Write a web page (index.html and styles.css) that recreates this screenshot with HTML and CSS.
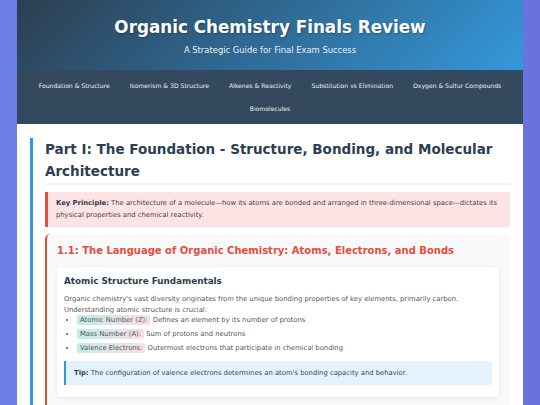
FILE: index.html
```html
<!DOCTYPE html>
<html lang="en">
<head>
<meta charset="utf-8">
<title>Organic Chemistry Finals Review</title>
<link rel="stylesheet" href="styles.css">
</head>
<body>
<div class="container">
  <header class="header">
    <h1 class="title">Organic Chemistry Finals Review</h1>
    <p class="subtitle">A Strategic Guide for Final Exam Success</p>
  </header>
  <nav class="nav">
    <a class="nav-link" href="#part1">Foundation &amp; Structure</a>
    <a class="nav-link" href="#part2">Isomerism &amp; 3D Structure</a>
    <a class="nav-link" href="#part3">Alkenes &amp; Reactivity</a>
    <a class="nav-link" href="#part4">Substitution vs Elimination</a>
    <a class="nav-link" href="#part5">Oxygen &amp; Sulfur Compounds</a>
    <a class="nav-link" href="#part6">Biomolecules</a>
  </nav>
  <main class="content">
    <section class="section" id="part1">
      <h2 class="section-title">Part I: The Foundation - Structure, Bonding, and Molecular Architecture</h2>
      <div class="key-box"><strong>Key Principle:</strong> The architecture of a molecule—how its atoms are bonded and arranged in three-dimensional space—dictates its physical properties and chemical reactivity.</div>
      <div class="subsection">
        <h3 class="subsection-title">1.1: The Language of Organic Chemistry: Atoms, Electrons, and Bonds</h3>
        <div class="card">
          <h4 class="card-title">Atomic Structure Fundamentals</h4>
          <p class="card-text">Organic chemistry's vast diversity originates from the unique bonding properties of key elements, primarily carbon. Understanding atomic structure is crucial:</p>
          <ul class="term-list">
            <li class="term-item"><span class="term">Atomic Number (Z):</span> Defines an element by its number of protons</li>
            <li class="term-item"><span class="term">Mass Number (A):</span> Sum of protons and neutrons</li>
            <li class="term-item"><span class="term">Valence Electrons:</span> Outermost electrons that participate in chemical bonding</li>
          </ul>
          <div class="tip-box"><strong>Tip:</strong> The configuration of valence electrons determines an atom's bonding capacity and behavior.</div>
        </div>
      </div>
    </section>
  </main>
</div>
</body>
</html>
```
FILE: styles.css
```css
* { box-sizing: border-box; }
html, body { height: 100%; }
body {
  margin: 0;
  padding: 0 17px;
  font-family: "DejaVu Sans", Verdana, sans-serif;
  background: linear-gradient(90deg, #6a7ee6 0%, #6873df 100%);
  overflow: hidden;
}
.container {
  background: #ffffff;
  min-height: 100%;
}
.header {
  background: linear-gradient(135deg, #2c3e50 0%, #3498db 100%);
  color: #ffffff;
  text-align: center;
  padding: 17px 10px 14px;
}
.title {
  margin: 0;
  font-size: 16.8px;
  line-height: 20px;
  font-weight: bold;
  text-shadow: 1px 1px 2px rgba(0,0,0,0.3);
}
.subtitle {
  margin: 7px 0 0;
  font-size: 8.4px;
  line-height: 12px;
  opacity: 0.9;
}
.nav {
  background: #34495e;
  display: flex;
  flex-wrap: wrap;
  justify-content: center;
  padding: 4px 0;
}
.nav-link {
  color: #ecf0f1;
  text-decoration: none;
  font-size: 6.1px;
  line-height: 9px;
  padding: 7px 10px;
}
.content {
  padding: 14px 13px;
}
.section {
  border-left: 3px solid #3498db;
  padding-left: 12px;
}
.section-title {
  margin: 0;
  font-size: 13.5px;
  line-height: 22px;
  color: #2c3e50;
  padding-bottom: 1px;
  border-bottom: 2px solid #f0f2f4;
}
.key-box {
  margin-top: 7px;
  background: #fde3e3;
  border-left: 3px solid #e74c3c;
  border-radius: 0 3px 3px 0;
  padding: 6px 8px;
  font-size: 6.8px;
  line-height: 11.5px;
  color: #444;
}
.key-box strong { color: #2c3e50; }
.subsection {
  margin-top: 7px;
  background: #f8f9fa;
  border-left: 2px solid #e74c3c;
  border-radius: 5px;
  padding: 8px 11px 10px 10px;
}
.subsection-title {
  margin: 0 0 7px;
  font-size: 10px;
  line-height: 18px;
  color: #e74c3c;
}
.card {
  background: #ffffff;
  border-radius: 4px;
  box-shadow: 0 1px 4px rgba(0,0,0,0.08);
  padding: 7px 7px 12px;
  margin-bottom: 10px;
}
.card-title {
  margin: 0 0 6px;
  font-size: 8.8px;
  line-height: 14px;
  color: #2c3e50;
}
.card-text {
  margin: 0;
  font-size: 6.8px;
  line-height: 11px;
  color: #555;
}
.term-list {
  margin: 0;
  padding-left: 13px;
  font-size: 6.8px;
  line-height: 9px;
  color: #555;
}
.term-item + .term-item {
  margin-top: 5px;
}
.term {
  background: linear-gradient(90deg, #bdeee8 0%, #fcdde6 100%);
  padding: 1px 3px;
  border-radius: 2px;
}
.tip-box {
  margin-top: 8px;
  background: #e3f2fd;
  border-left: 2px solid #3498db;
  border-radius: 0 3px 3px 0;
  padding: 7px 8px;
  font-size: 6.8px;
  line-height: 10px;
  color: #444;
}
.tip-box strong { color: #2c3e50; }
```
